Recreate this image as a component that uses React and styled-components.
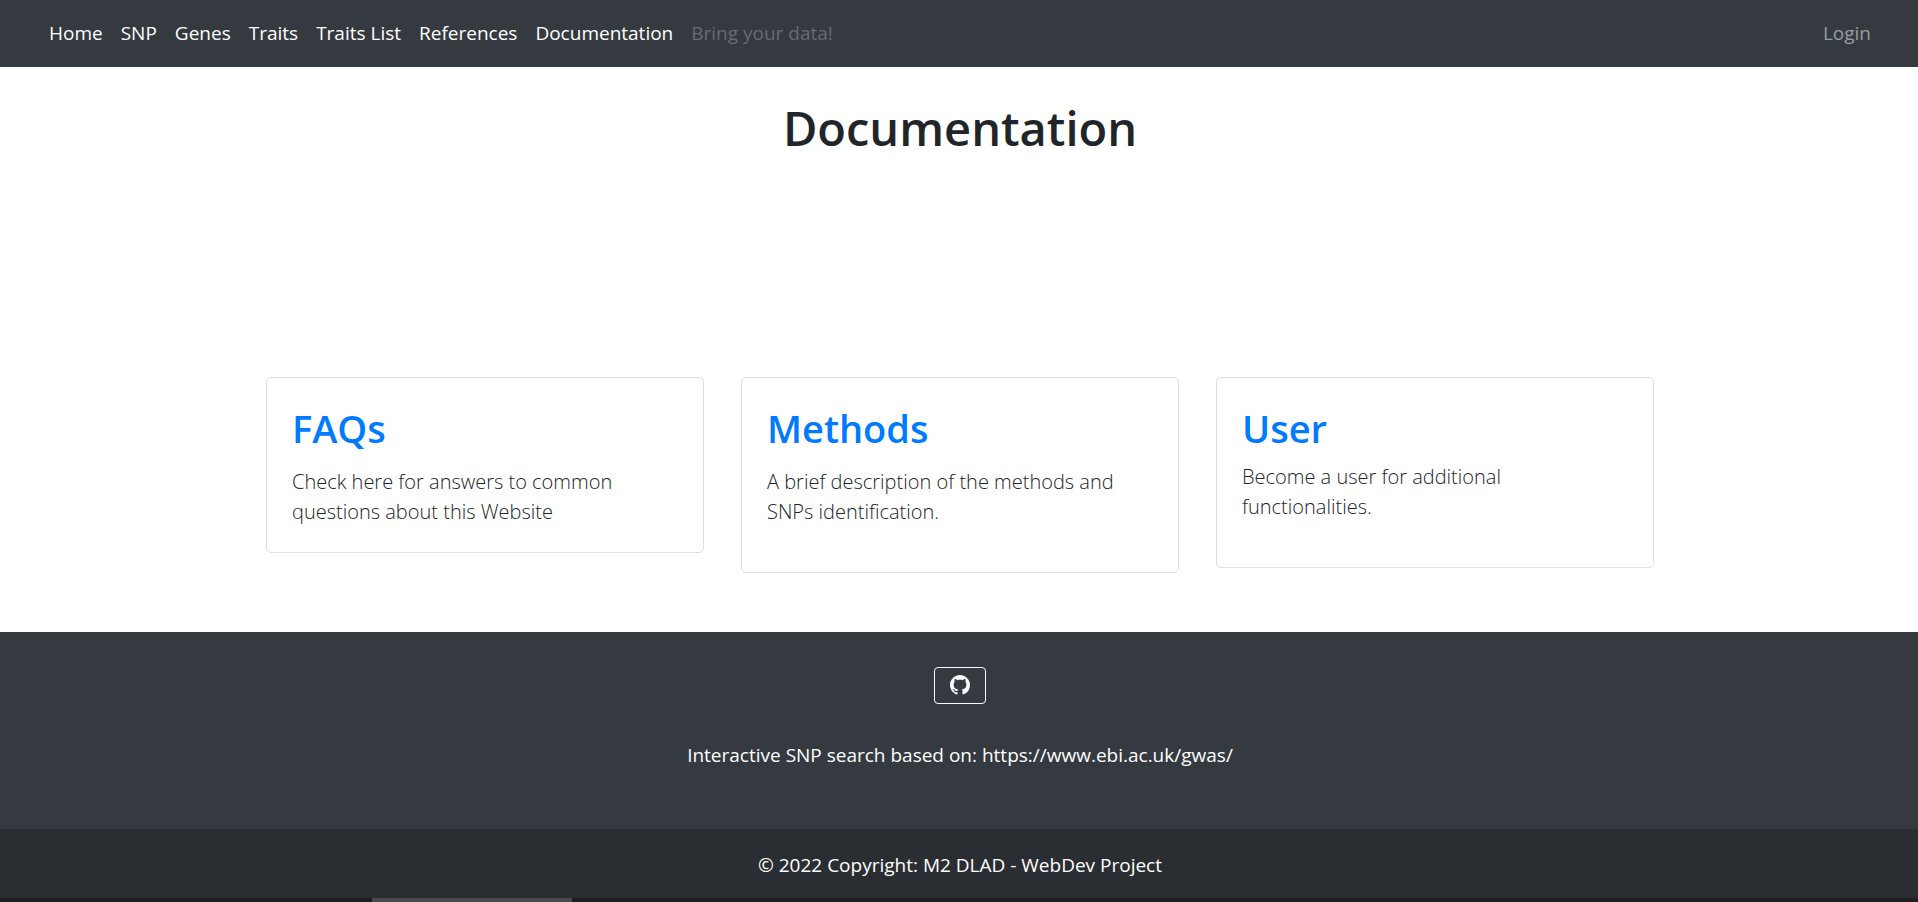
import React from 'react';
import styled, { createGlobalStyle } from 'styled-components';

const GlobalStyle = createGlobalStyle`
  *, *::before, *::after { box-sizing: border-box; }
  body {
    margin: 0;
    background: #fff;
    color: #212529;
    font-family: "Segoe UI", "Open Sans", "Noto Sans", sans-serif;
    font-size: 19px;
    line-height: 30px;
  }
  h1, h2, p { margin: 0; }
  a { text-decoration: none; }
`;

const NavBar = styled.nav`
  display: flex;
  justify-content: space-between;
  padding: 18px 47px 19px 49px;
  background: #343a40;
`;

const NavList = styled.ul`
  display: flex;
  flex-wrap: wrap;
  gap: 18px;
  margin: 0;
  padding: 0;
  list-style: none;
`;

const NavLink = styled.a`
  color: ${({ $tone }) =>
    ({ disabled: '#676b70', muted: '#999c9f' })[$tone] || '#fff'};
`;

const Main = styled.main`
  display: flex;
  flex-direction: column;
  align-items: center;
  padding: 31px 18px 59px 20px;
`;

const PageTitle = styled.h1`
  font-size: 47px;
  font-weight: 600;
  line-height: 60px;
`;

const Cards = styled.div`
  display: grid;
  grid-template-columns: repeat(auto-fit, minmax(320px, 1fr));
  align-items: start;
  gap: 37px;
  width: 100%;
  max-width: 1388px;
  margin-top: 219px;
`;

const Card = styled.article`
  padding: 26px 25px ${({ $roomy }) => ($roomy ? '45px' : '25px')};
  border: 1px solid #dfdfdf;
  border-radius: 5px;
`;

const CardTitle = styled.h2`
  margin-bottom: ${({ $tight }) => ($tight ? '10px' : '15px')};
  font-size: 38px;
  font-weight: 600;
  line-height: 48px;

  a { color: #007bff; }
`;

const CardText = styled.p`
  max-width: 360px;
  font-size: 20px;
  font-weight: 300;
`;

const Footer = styled.footer`
  background: #343a40;
  color: #fff;
  text-align: center;
`;

const FooterBody = styled.div`
  display: flex;
  flex-direction: column;
  align-items: center;
  gap: 36px;
  padding: 35px 18px 59px 20px;
`;

const IconButton = styled.button`
  display: flex;
  align-items: center;
  justify-content: center;
  width: 52px;
  height: 37px;
  padding: 0 0 2px;
  border: 1px solid #f8f9fa;
  border-radius: 4px;
  background: transparent;
  color: #f8f9fa;
`;

const Copyright = styled.div`
  padding: 21px 18px 18px 20px;
  background: #2a2e33;
`;

const BottomEdge = styled.div`
  display: flex;
  height: 4px;
  padding-left: 372px;
  background: #1e1c1e;
`;

const EdgeThumb = styled.span`
  width: 200px;
  background: #4a494b;
`;

const links = ['Home', 'SNP', 'Genes', 'Traits', 'Traits List', 'References', 'Documentation'];

const cards = [
  { title: 'FAQs', text: 'Check here for answers to common questions about this Website' },
  { title: 'Methods', text: 'A brief description of the methods and SNPs identification.', roomy: true },
  { title: 'User', text: 'Become a user for additional functionalities.', roomy: true, tight: true },
];

const GithubIcon = () => (
  <svg width="20" height="20" viewBox="0 0 16 16" fill="currentColor" aria-hidden="true">
    <path d="M8 0C3.58 0 0 3.58 0 8c0 3.54 2.29 6.53 5.47 7.59.4.07.55-.17.55-.38 0-.19-.01-.82-.01-1.49-2.01.37-2.53-.49-2.69-.94-.09-.23-.48-.94-.82-1.13-.28-.15-.68-.52-.01-.53.63-.01 1.08.58 1.23.82.72 1.21 1.87.87 2.33.66.07-.52.28-.87.51-1.07-1.78-.2-3.64-.89-3.64-3.95 0-.87.31-1.59.82-2.15-.08-.2-.36-1.02.08-2.12 0 0 .67-.21 2.2.82.64-.18 1.32-.27 2-.27s1.36.09 2 .27c1.53-1.04 2.2-.82 2.2-.82.44 1.1.16 1.92.08 2.12.51.56.82 1.27.82 2.15 0 3.07-1.87 3.75-3.65 3.95.29.25.54.73.54 1.48 0 1.07-.01 1.93-.01 2.2 0 .21.15.46.55.38A8.01 8.01 0 0 0 16 8c0-4.42-3.58-8-8-8z" />
  </svg>
);

export default function App() {
  return (
    <>
      <GlobalStyle />
      <NavBar>
        <NavList>
          {links.map((label) => (
            <li key={label}><NavLink href="#">{label}</NavLink></li>
          ))}
          <li><NavLink href="#" $tone="disabled" aria-disabled="true">Bring your data!</NavLink></li>
        </NavList>
        <NavLink href="#" $tone="muted">Login</NavLink>
      </NavBar>
      <Main>
        <PageTitle>Documentation</PageTitle>
        <Cards>
          {cards.map(({ title, text, roomy, tight }) => (
            <Card key={title} $roomy={roomy}>
              <CardTitle $tight={tight}><a href="#">{title}</a></CardTitle>
              <CardText>{text}</CardText>
            </Card>
          ))}
        </Cards>
      </Main>
      <Footer>
        <FooterBody>
          <IconButton type="button" aria-label="GitHub"><GithubIcon /></IconButton>
          <p>Interactive SNP search based on: https://www.ebi.ac.uk/gwas/</p>
        </FooterBody>
        <Copyright>© 2022 Copyright: M2 DLAD - WebDev Project</Copyright>
      </Footer>
      <BottomEdge><EdgeThumb /></BottomEdge>
    </>
  );
}
